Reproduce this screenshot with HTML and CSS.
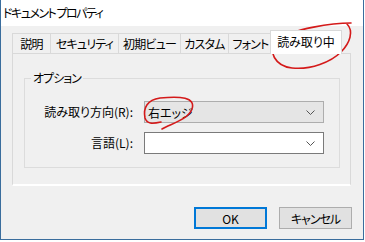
FILE: index.html
```html
<!DOCTYPE html>
<html lang="ja">
<head>
    <meta charset="UTF-8">
    <title>ドキュメント プロパティ</title>
    <link rel="stylesheet" href="styles.css">
</head>
<body>
    <div class="window">
        <div class="titlebar">ドキュメント プロパティ</div>

        <div class="content">
            <div class="tabs">
                <div class="tab tab-desc">説明</div>
                <div class="tab tab-security">セキュリティ</div>
                <div class="tab tab-initial">初期ビュー</div>
                <div class="tab tab-custom">カスタム</div>
                <div class="tab tab-font">フォント</div>
                <div class="tab tab-reading active">読み取り中</div>
            </div>

            <div class="panel">
                <fieldset class="group">
                    <legend>オプション</legend>
                    <div class="rows">
                        <label class="row-label">読み取り方向(<u>R</u>):</label>
                        <div class="combo readonly">
                            <span>右エッジ</span>
                            <svg class="chev" width="9" height="5" viewBox="0 0 9 5"><path d="M0.5 0.5 L4.5 4.5 L8.5 0.5" fill="none" stroke="#555" stroke-width="1"/></svg>
                        </div>
                        <label class="row-label">言語(<u>L</u>):</label>
                        <div class="combo">
                            <span></span>
                            <svg class="chev" width="9" height="5" viewBox="0 0 9 5"><path d="M0.5 0.5 L4.5 4.5 L8.5 0.5" fill="none" stroke="#555" stroke-width="1"/></svg>
                        </div>
                    </div>
                </fieldset>
            </div>

            <div class="actions">
                <button class="btn default">OK</button>
                <button class="btn">キャンセル</button>
            </div>
        </div>

        <!-- red pen marks drawn over the screenshot -->
        <svg class="marks" width="365" height="242" viewBox="0 0 365 242">
            <path d="M351 23 C335 23 292 28 277 41 C267 51 275 66 292 68 C311 70 331 62 341 52 C350 43 354 31 347 24" fill="none" stroke="#d41a1a" stroke-width="1.6" stroke-linecap="round"/>
            <path d="M162 129 C170 124 188 120 192 109 C196 97 180 96 160 98 C147 100 143 108 145 118 C147 124 152 124 161 122" fill="none" stroke="#d41a1a" stroke-width="1.6" stroke-linecap="round"/>
        </svg>
    </div>
</body>
</html>
```

FILE: styles.css
```css
* {
    margin: 0;
    padding: 0;
    box-sizing: border-box;
}

body {
    font-family: "Noto Sans CJK JP", "Noto Sans", sans-serif;
    font-size: 12px;
    font-feature-settings: "palt";
    color: #000;
    background: #fff;
}

.window {
    position: relative;
    width: 364px;
    height: 240px;
    background: #f0f0f0;
    border-left: 1px solid #3a6d9d;
    border-right: 1px solid #3a6d9d;
    border-bottom: 1px solid #3a6d9d;
}

.titlebar {
    height: 26px;
    background: #fff;
    padding-left: 2px;
    line-height: 26px;
    letter-spacing: -1.5px;
}

.content {
    padding: 7px 11px 0 11px;
}

.tabs {
    display: flex;
    height: 20px;
    align-items: flex-end;
    position: relative;
    z-index: 1;
}

.tab {
    flex: none;
    white-space: nowrap;
    text-align: center;
    height: 20px;
    line-height: 19px;
    letter-spacing: -0.8px;
    border: 1px solid #d9d9d9;
    border-bottom: none;
    border-right: none;
    background: #f0f0f0;
}

.tab-desc { width: 38px; }
.tab-security { width: 68px; }
.tab-initial { width: 62px; }
.tab-custom { width: 48px; }
.tab-font { width: 44px; }
.tab-reading { width: 72px; }

.tab.active {
    height: 24px;
    margin: 0 0 -1px -2px;
    background: #fff;
    border-right: 1px solid #d9d9d9;
    line-height: 22px;
    letter-spacing: 0;
}

.panel {
    width: 339px;
    height: 133px;
    border: 1px solid #d9d9d9;
    border-bottom: 2px solid #fff;
    background: #f0f0f0;
    padding: 17px 10px 0 11px;
}

.group {
    border: 1px solid #dcdcdc;
    height: 97px;
    padding: 0;
}

.group legend {
    margin-left: 6px;
    padding: 0 2px;
    line-height: 14px;
    letter-spacing: -1px;
}

.rows {
    display: grid;
    grid-template-columns: 108px 180px;
    column-gap: 11px;
    row-gap: 9px;
    padding-top: 16px;
}

.row-label {
    text-align: right;
    line-height: 22px;
    white-space: nowrap;
}

.row-label u {
    text-decoration: none;
}

.combo {
    height: 22px;
    border: 1px solid #7a7a7a;
    background: #fff;
    display: flex;
    align-items: center;
    justify-content: space-between;
    padding: 0 8px 0 3px;
}

.combo.readonly {
    background: #e5e5e5;
    border-color: #adadad;
}

.chev {
    display: block;
}

.actions {
    display: flex;
    justify-content: flex-end;
    gap: 12px;
    padding-top: 21px;
}

.btn {
    width: 73px;
    height: 22px;
    font: inherit;
    background: #e1e1e1;
    border: 1px solid #adadad;
    color: #000;
    letter-spacing: -1px;
}

.btn.default {
    border: 2px solid #0078d7;
    letter-spacing: 0;
}

.marks {
    position: absolute;
    left: -1px;
    top: 0;
    pointer-events: none;
}
```
